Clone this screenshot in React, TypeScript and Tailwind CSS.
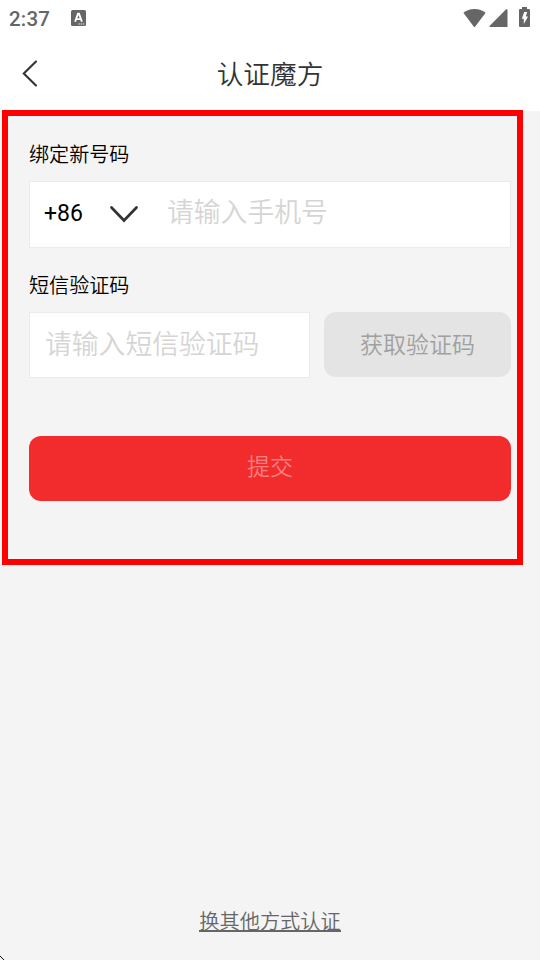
import type { ReactNode } from 'react';

function StatusBar() {
  return (
    <div className="flex h-[37px] items-center text-[#666]">
      <span className="ml-[9px] w-[42px] pt-px font-['Roboto',sans-serif] text-[20.5px] leading-none font-medium tracking-[0.2px]">2:37</span>
      <svg className="mb-px ml-5 h-4 w-[15px]" viewBox="0 0 15 16">
        <rect width="15" height="16" rx="1.5" fill="#666" />
        <path d="M4.1 11.7 7 3.7h1L10.9 11.7M5.3 9.1h4.4" fill="none" stroke="#fff" strokeWidth="1.9" />
        <path d="M7.5 14h1.3M9.7 14h1.3M11.9 14h1.3" stroke="#fff" strokeWidth="1.2" />
      </svg>
      <svg className="mr-[3px] ml-auto h-[20px] w-[23px]" viewBox="0 0 23 20">
        <path d="M.4 3.8C3.3 1.3 7.1 0 11.5 0s8.2 1.3 11.1 3.8L11.9 17.9h-.8z" fill="currentColor" />
      </svg>
      <svg className="h-[20px] w-[19px]" viewBox="0 0 19 20">
        <path d="M18.5 1v17H1.2C.4 18 .2 17.3.8 16.7L16.9.6c.6-.6 1.6-.4 1.6.4z" fill="currentColor" />
      </svg>
      <svg className="mr-[10px] mb-[3px] ml-[11px] h-[20px] w-[11px]" viewBox="0 0 11 20">
        <path d="M3 0h5v2h1.7C10.5 2 11 2.5 11 3.3v15.4c0 .8-.5 1.3-1.3 1.3H1.3C.5 20 0 19.5 0 18.7V3.3C0 2.5.5 2 1.3 2H3z" fill="currentColor" />
        <path d="M5.2 5h3L6.8 9.400h2.200L4.800 17v-5.300H2.800z" fill="#fff" />
      </svg>
    </div>
  );
}

function Label({ children }: { children: ReactNode }) {
  return <div className="h-7 text-[20.1px] leading-7 text-black">{ children }</div>;
}

export default function App() {
  return (
    <div className="relative flex h-[960px] w-[540px] flex-col overflow-hidden bg-[#f4f4f4] font-['Noto_Sans_CJK_SC',sans-serif] font-[350]">
      <header className="h-[111px] bg-white">
        <StatusBar />
        <div className="grid h-[73px] grid-cols-[60px_1fr_60px] items-center">
          <button className="pl-[22px]">
            <svg className="h-[27px] w-4" viewBox="0 0 16 27" fill="none" stroke="#333" strokeWidth="2.1" strokeLinecap="round">
              <path d="M14 1.5 1.8 13.5 14 25.5" />
            </svg>
          </button>
          <h1 className="pb-px text-center text-[26.7px] leading-none font-[350] text-[#333]">认证魔方</h1>
        </div>
      </header>

      <main className="px-[29px] pt-[29px]">
        <Label>绑定新号码</Label>
        <div className="mt-[13px] flex h-[67px] items-center border border-[#ebebeb] bg-white">
          <span className="mb-[3px] ml-[14px] w-[66px] font-['Roboto',sans-serif] text-[23px] leading-none font-normal text-black">+86</span>
          <svg className="mb-[2px] h-[18px] w-[28px]" viewBox="0 0 28 18" fill="none" stroke="#333" strokeWidth="2.7" strokeLinecap="round">
            <path d="M1.5 2.5 14 15.5 26.5 2.5" />
          </svg>
          <input className="mb-[7px] ml-[29px] h-10 w-[300px] text-[26.8px] outline-none placeholder:text-[#d5d5d5]" placeholder="请输入手机号" />
        </div>

        <div className="mt-[23px]">
          <Label>短信验证码</Label>
        </div>
        <div className="mt-[13px] flex gap-[14px]">
          <div className="flex h-[66px] w-[281px] items-center border border-[#ebebeb] bg-white">
            <input className="mb-[4px] ml-[15px] h-10 w-[250px] text-[26.8px] outline-none placeholder:text-[#d5d5d5]" placeholder="请输入短信验证码" />
          </div>
          <button className="h-[65px] w-[187px] rounded-[12px] bg-[#e4e4e4] pb-[2px] text-[23px] text-[#a0a0a0]">获取验证码</button>
        </div>

        <button className="mt-[58px] flex h-[65px] w-full justify-center rounded-[12px] bg-[#f22c2d] pt-[12px] text-[23px] leading-[34px] text-[#f98081]">提交</button>
      </main>

      <footer className="mt-auto flex justify-center pb-[28px]">
        <a className="h-[24px] border-b-2 border-[#666] text-[20.2px] leading-[25px] text-[#666]">换其他方式认证</a>
      </footer>

      {/* highlight frame over the form */}
      <div className="pointer-events-none absolute top-[110px] left-[2px] h-[455px] w-[521px] border-6 border-[#fe0000]" />
      <svg className="absolute bottom-0 left-0 h-1 w-1" viewBox="0 0 4 4">
        <path d="M0 0h1v1h1v1h1v1h1v1H3V3H2V2H1V1H0z" fill="#111" />
      </svg>
    </div>
  );
}
